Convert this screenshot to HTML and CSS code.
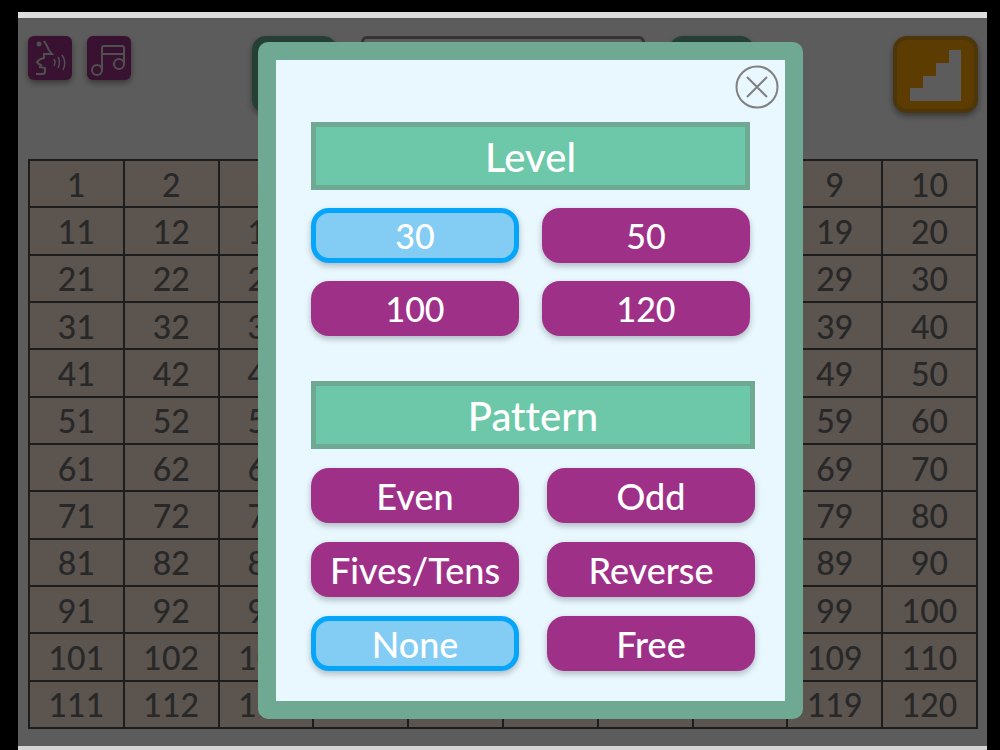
FILE: index.html
```html
<!DOCTYPE html>
<html lang="en">
<head>
  <meta charset="UTF-8">
  <meta name="viewport" content="width=device-width, initial-scale=1.0">
  <title>Number Chart</title>
  <link rel="stylesheet" href="styles.css">
</head>
<body>
  <main class="stage">
    <header class="toolbar">
      <div class="sound-buttons">
        <button class="icon-btn" aria-label="Voice">
          <svg viewBox="0 0 44 44" fill="none" stroke="#ddd" stroke-width="2">
            <circle cx="11" cy="8" r="2.5" fill="#ddd" stroke="none"/>
            <path d="M16 5l3 5q1 4 5 8h-8v4q-5 1-7 4 1 2 4 3l-1 2 5 1v4q0 2-3 2H8"/>
            <path d="M26 23q2 3 0 7M30 21q3 5 0 11M34 19q5 7 1 15" stroke-width="1.5"/>
          </svg>
        </button>
        <button class="icon-btn" aria-label="Music">
          <svg viewBox="0 0 44 44" fill="none" stroke="#ddd" stroke-width="2">
            <path d="M15 34V12q0-2 2-2h18q2 0 2 2v16M15 18h22"/>
            <circle cx="10" cy="34" r="5"/>
            <circle cx="32" cy="28" r="5"/>
          </svg>
        </button>
      </div>
      <div class="answer">
        <button class="nav-btn" aria-label="Previous"></button>
        <input class="answer-box" type="text" aria-label="Number">
        <button class="nav-btn" aria-label="Next"></button>
      </div>
      <button class="level-btn" aria-label="Level">
        <svg viewBox="0 0 51 51" fill="#fff"><path d="M0 51V38h13V26h13V13h13V0h12v51z"/></svg>
      </button>
    </header>

    <table class="chart"><tbody id="chart"></tbody></table>

    <div class="overlay">
      <section class="modal" role="dialog" aria-label="Options">
        <button class="close" aria-label="Close">
          <svg viewBox="0 0 44 44" fill="none" stroke="#808080" stroke-width="2">
            <circle cx="22" cy="22" r="20.5"/>
            <path d="M12 12l20 20M32 12L12 32"/>
          </svg>
        </button>
        <div class="group level">
          <h2>Level</h2>
          <button class="option selected">30</button>
          <button class="option">50</button>
          <button class="option">100</button>
          <button class="option">120</button>
        </div>
        <div class="group pattern">
          <h2>Pattern</h2>
          <button class="option">Even</button>
          <button class="option">Odd</button>
          <button class="option">Fives/Tens</button>
          <button class="option">Reverse</button>
          <button class="option selected">None</button>
          <button class="option">Free</button>
        </div>
      </section>
    </div>
  </main>
  <script>
    const chart = document.getElementById("chart");
    for (let r = 0; r < 12; r++) {
      const row = chart.insertRow();
      for (let c = 1; c <= 10; c++) {
        row.insertCell().textContent = r * 10 + c;
      }
    }

    document.querySelectorAll(".group").forEach((group) => {
      const options = group.querySelectorAll(".option");
      options.forEach((option) => {
        option.onclick = () => {
          options.forEach((o) => o.classList.remove("selected"));
          option.classList.add("selected");
        };
      });
    });

    const overlay = document.querySelector(".overlay");
    document.querySelector(".close").onclick = () => { overlay.style.display = "none"; };
    document.querySelector(".level-btn").onclick = () => { overlay.style.display = "flex"; };
  </script>
</body>
</html>
```
FILE: styles.css
```css
* { box-sizing: border-box; }
body {
  margin: 0;
  padding: 12px 13px 0 18px;
  background: #000;
  font-family: "Comic Sans MS", Lato, sans-serif;
  font-weight: 500;
  font-variant-ligatures: none;
}
button, input {
  font: inherit;
  padding: 0;
}
button { cursor: pointer; }
svg { display: block; }
.stage {
  position: relative;
  min-height: calc(100vh - 12px);
  padding: 0 9px 17px 10px;
  background: #fff;
  border-top: 6px solid #dedede;
  border-bottom: 4px solid #d4d4d4;
}

/* toolbar */
.toolbar {
  display: grid;
  grid-template-columns: 1fr auto 1fr;
  align-items: start;
  height: 141px;
  padding-top: 18px;
}
.sound-buttons {
  display: flex;
  gap: 15px;
}
.icon-btn {
  width: 44px;
  height: 44px;
  background: #9e3088;
  border: none;
  border-radius: 6px;
  box-shadow: 0 3px 6px rgba(0, 0, 0, 0.4);
}
.answer {
  display: flex;
  gap: 24px;
}
.nav-btn {
  width: 85px;
  height: 77px;
  background: #69af93;
  border: 6px solid #69af93;
  border-radius: 14px;
  box-shadow: 0 3px 6px rgba(0, 0, 0, 0.4);
}
.answer-box {
  width: 284px;
  height: 77px;
  border: 3px solid #909090;
  border-radius: 6px;
}
.level-btn {
  justify-self: end;
  width: 85px;
  height: 77px;
  padding: 10px 13px 8px;
  background: #ffa600;
  border: 4px solid #d89520;
  border-radius: 14px;
  box-shadow: 0 3px 6px rgba(0, 0, 0, 0.4);
}
.level-btn svg {
  width: 51px;
  height: 51px;
}

/* number chart */
.chart {
  width: 100%;
  height: calc(100vh - 180px);
  table-layout: fixed;
  border-collapse: collapse;
  background: #fde9dc;
  color: #707070;
  font-size: 32px;
  line-height: 40px;
  text-align: center;
}
.chart td {
  padding: 2px 0 0;
  border: 2px solid #505050;
}

/* options */
.overlay {
  position: absolute;
  inset: 0;
  display: flex;
  justify-content: center;
  align-items: flex-start;
  padding: 24px 0 24px 56px;
  background: rgba(0, 0, 0, 0.64);
}
.modal {
  position: relative;
  width: 545px;
  padding: 62px 29px 30px 35px;
  background: #e9f7ff;
  border: 18px solid #6fa994;
  border-radius: 10px;
}
.close {
  position: absolute;
  top: 5px;
  right: 6px;
  width: 44px;
  height: 44px;
  background: none;
  border: none;
}
.group {
  display: grid;
  grid-template-columns: 208px 208px;
  justify-content: start;
}
.level {
  gap: 18px 23px;
  margin-bottom: 45px;
}
.pattern { gap: 19px 28px; }
.group h2 {
  grid-column: 1 / -1;
  margin: 0;
  height: 68px;
  background: #6cc8a8;
  border: 5px solid #6fa994;
  color: #fff;
  font-size: 40px;
  font-weight: 500;
  line-height: 60px;
  text-align: center;
}
.option {
  height: 55px;
  background: #9e3088;
  border: none;
  border-radius: 18px;
  box-shadow: 0 3px 6px rgba(0, 0, 0, 0.25);
  color: #fff;
  font-size: 36px;
  line-height: 48px;
}
.level .option { font-size: 34px; }
.option.selected {
  background: #83ccf4;
  border: 5px solid #05a5fa;
  line-height: 40px;
}
```
